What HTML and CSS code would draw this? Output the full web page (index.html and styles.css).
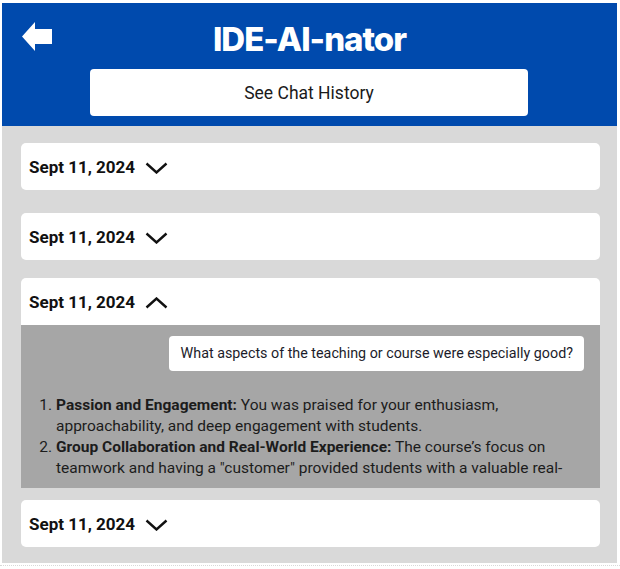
FILE: index.html
```html
<!DOCTYPE html>
<html lang="en">
<head>
<meta charset="utf-8">
<title>IDE-AI-nator</title>
<link rel="stylesheet" href="styles.css">
</head>
<body>
<div class="app">
  <header class="header">
    <div class="title-row">
      <button class="back" aria-label="Back">
        <svg width="30" height="29" viewBox="0 0 30 29"><path d="M0 14.5 L13 0 V7 H30 V22 H13 V29 Z" fill="#fff"/></svg>
      </button>
      <h1 class="title">IDE-AI-nator</h1>
      <span></span>
    </div>
    <button class="history-btn">See Chat History</button>
  </header>
  <main class="entries">
    <div class="entry entry--first">
      <div class="entry-head"><span class="date">Sept 11, 2024</span>
        <svg class="chev" width="23" height="12" viewBox="0 0 23 12"><path d="M1.5 1.5 L11.5 10.5 L21.5 1.5" fill="none" stroke="#111" stroke-width="2.4"/></svg></div>
    </div>
    <div class="entry">
      <div class="entry-head"><span class="date">Sept 11, 2024</span>
        <svg class="chev" width="23" height="12" viewBox="0 0 23 12"><path d="M1.5 1.5 L11.5 10.5 L21.5 1.5" fill="none" stroke="#111" stroke-width="2.4"/></svg></div>
    </div>
    <div class="entry entry--open">
      <div class="entry-head entry-head--open"><span class="date">Sept 11, 2024</span>
        <svg class="chev" width="23" height="12" viewBox="0 0 23 12"><path d="M1.5 10.5 L11.5 1.5 L21.5 10.5" fill="none" stroke="#111" stroke-width="2.4"/></svg></div>
      <div class="panel">
        <div class="bubble">What aspects of the teaching or course were especially good?</div>
        <div class="answer">
          <ol>
            <li><b>Passion and Engagement:</b> You was praised for your enthusiasm, approachability, and deep engagement with students.</li>
            <li><b>Group Collaboration and Real-World Experience:</b> The course’s focus on teamwork and having a "customer" provided students with a valuable real-world experience.</li>
          </ol>
        </div>
      </div>
    </div>
    <div class="entry">
      <div class="entry-head"><span class="date">Sept 11, 2024</span>
        <svg class="chev" width="23" height="12" viewBox="0 0 23 12"><path d="M1.5 1.5 L11.5 10.5 L21.5 1.5" fill="none" stroke="#111" stroke-width="2.4"/></svg></div>
    </div>
  </main>
</div>
<div class="page-edge"></div>
</body>
</html>
```

FILE: styles.css
```css
* { box-sizing: border-box; }
html, body { margin: 0; padding: 0; background: #fff; }
body { font-family: Roboto, "Liberation Sans", Arial, sans-serif; color: #1a1a1a; }

.app {
  width: 615px;
  margin: 3px 0 0 2px;
  background: #d9d9d9;
}

.header {
  background: #004aad;
  height: 123px;
  padding: 16px 0 0;
  display: flex;
  flex-direction: column;
  align-items: center;
}

.title-row {
  width: 100%;
  display: grid;
  grid-template-columns: 1fr auto 1fr;
  align-items: center;
  height: 40px;
}

.back {
  justify-self: start;
  align-self: start;
  margin: 3px 0 0 20px;
  padding: 0;
  border: 0;
  background: none;
  display: flex;
}

.title {
  margin: 0;
  font-family: Inter, "Open Sans", sans-serif;
  font-weight: 800;
  font-size: 33px;
  letter-spacing: -1px;
  line-height: 40px;
  color: #fff;
}

.history-btn {
  margin-top: 10px;
  margin-left: -1px;
  width: 438px;
  height: 47px;
  border: 0;
  border-radius: 4px;
  background: #fff;
  font-family: Roboto, "Liberation Sans", sans-serif;
  font-size: 17.5px;
  color: #1a1a1a;
}

.entries {
  display: flex;
  flex-direction: column;
  gap: 18px;
  padding: 17px 17px 16px 19px;
}

.entry--first { margin-bottom: 5px; }
.entry--open { margin-bottom: -6px; }

.entry-head {
  height: 47px;
  background: #fff;
  border-radius: 5px;
  display: flex;
  align-items: center;
  gap: 10px;
  padding: 0 0 0 8px;
}

.entry-head--open { border-radius: 5px 5px 0 0; }

.date {
  font-weight: 700;
  font-size: 17px;
  color: #111;
}

.chev { display: block; margin-top: 2px; }

.panel {
  height: 163px;
  background: #a6a6a6;
  padding: 11px 16px 8px 0;
  display: flex;
  flex-direction: column;
}

.bubble {
  align-self: flex-end;
  background: #fff;
  border-radius: 4px;
  padding: 8px 11px 8px 12px;
  font-size: 14.3px;
  line-height: 19px;
  color: #1c1c2a;
}

.answer {
  margin-top: 24px;
  height: 84px;
  overflow: hidden;
}

.answer ol {
  margin: 0;
  padding: 0 4px 0 35px;
  font-size: 15.5px;
  line-height: 21px;
  color: #1c1c1c;
}

.answer b { font-weight: 700; }

.page-edge {
  width: 620px;
  margin-top: 2px;
  border-top: 1px dotted #d8d8d8;
}
```
